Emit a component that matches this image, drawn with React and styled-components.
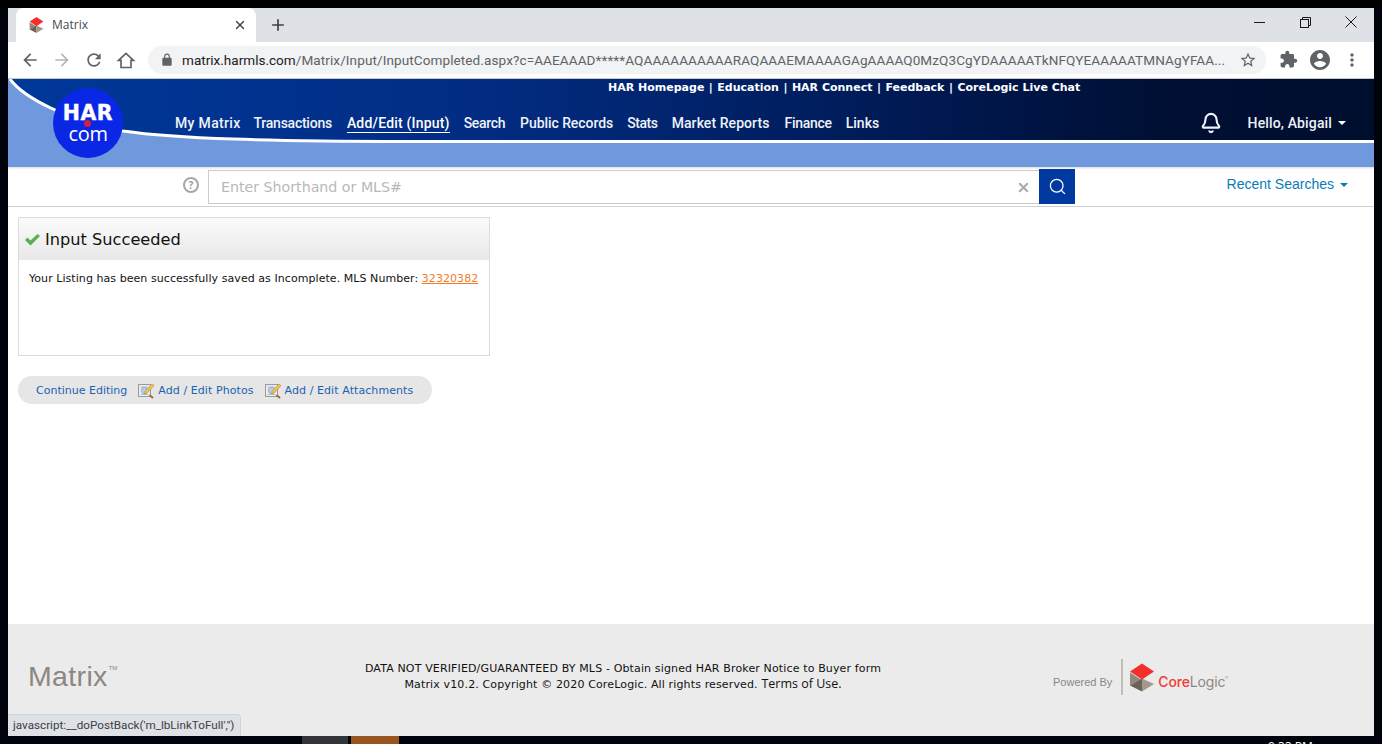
import React from 'react';
import styled, { createGlobalStyle } from 'styled-components';
import { Bell, Search, X } from 'lucide-react';

const Global = createGlobalStyle`
  html, body { margin: 0; padding: 0; background: #000; }
  * { box-sizing: border-box; }
`;
const Screen = styled.div`
  width: 1382px; height: 744px; background: #00030c; overflow: hidden;
  display: flex; flex-direction: column; position: relative;
`;
const TopEdge = styled.div`height: 8px; background: #000; flex: none;`;
const Window = styled.div`
  flex: 1; min-height: 0; margin: 0 8px; background: #fff; display: flex; flex-direction: column; position: relative;
`;
const TabStrip = styled.div`
  height: 34px; flex: none; background: #dee1e6; display: flex; align-items: flex-end; padding-left: 8px;
`;
const Tab = styled.div`
  width: 240px; height: 34px; background: #fff; border-radius: 8px 8px 0 0; display: flex; align-items: center;
  padding: 0 9px 0 13px; font: 12px "Open Sans", sans-serif; color: #45494d;
`;
const TabTitle = styled.span`margin-left: 8px; flex: 1; margin-top: -1px;`;
const NewTab = styled.div`width: 44px; height: 34px; display: flex; align-items: center; justify-content: center;`;
const WinControls = styled.div`margin-left: auto; height: 34px; display: flex; align-items: center;`;
const WinBtn = styled.div`width: 46px; height: 28px; display: flex; align-items: center; justify-content: center; margin-bottom: 6px;`;
const Toolbar = styled.div`
  height: 37px; flex: none; background: #fff; border-bottom: 1px solid #c9cbce; display: flex; align-items: center; padding: 0 6px 1px 6px;
`;
const NavBtn = styled.div`width: 32px; height: 28px; display: flex; align-items: center; justify-content: center;`;
const UrlPill = styled.div`
  width: 1118px; height: 28px; margin-left: 6px; margin-right: 6px; border-radius: 14px; background: #f1f3f4;
  display: flex; align-items: center; padding: 0 9px 0 12px; font: 13.55px "Roboto", sans-serif; color: #5f6368; flex: none;
`;
const UrlText = styled.div`
  margin-left: 8px; margin-right: 12px; flex: 1; min-width: 0; white-space: nowrap; overflow: hidden; letter-spacing: .09px;
  b { font-weight: 400; color: #202124; letter-spacing: 0; }
`;
const Header = styled.header`
  height: 88px; flex: none; position: relative; overflow: hidden; color: #fff;
  background: linear-gradient(90deg, #00389b 0%, #022c82 35%, #001a55 65%, #000f33 85%, #000e2e 100%);
  display: flex; flex-direction: column; box-shadow: 0 1px 2px rgba(0,0,0,.15);
`;
const Swoosh = styled.svg`position: absolute; left: 0; top: 0; width: 1366px; height: 88px;`;
const TopLinks = styled.div`
  position: relative; height: 17px; padding-left: 600px; margin-top: 1px;
  font: bold 11px/16px "DejaVu Sans", sans-serif; white-space: nowrap;
`;
const Sep = styled.span`margin: 0 .65px;`;
const NavRow = styled.nav`
  position: relative; display: flex; align-items: center; margin-top: 16px; height: 20px; padding-left: 167px;
`;
const NavItem = styled.a`
  font: 500 14px/18px "Roboto", sans-serif; color: #eef2fa; margin-right: ${p => p.$mr ?? 14}px; white-space: nowrap;
  letter-spacing: ${p => p.$ls || 0}px;
  border-bottom: 1px solid ${p => (p.$active ? '#fff' : 'transparent')};
  ${p => p.$active && 'color:#fff;'}
`;
const UserArea = styled.div`
  margin-left: auto; display: flex; align-items: center; padding-right: 28px;
  font: 500 14px "Roboto", sans-serif; color: #eef2fa; letter-spacing: .14px;
`;
const Caret = styled.span`
  display: inline-block; width: 0; height: 0; border-left: 4px solid transparent; border-right: 4px solid transparent;
  border-top: 4px solid ${p => p.$c || '#fff'}; margin-left: 6px; vertical-align: middle;
`;
const Logo = styled.div`
  position: absolute; left: 45px; top: 9px; width: 70px; height: 70px; border-radius: 50%; background: #0b27e6;
  display: flex; flex-direction: column; align-items: center; color: #fff;
`;
const LogoHar = styled.span`
  font: bold 20.5px/20px "DejaVu Sans", sans-serif; margin-top: 15px; letter-spacing: .5px; -webkit-text-stroke: .4px #fff;
`;
const LogoCom = styled.span`font: 400 20px/19px "Open Sans", sans-serif; margin-top: 1px; letter-spacing: -.3px;`;
const LogoDot = styled.span`position: absolute; left: 31px; top: 32px; width: 7px; height: 7px; border-radius: 50%; background: #d4213d;`;
const SearchRow = styled.div`
  height: 40px; flex: none; border-bottom: 1px solid #d2d2d2; display: flex; align-items: flex-start; position: relative; padding: 2px 0 0 175px;
`;
const Help = styled.div`
  width: 16px; height: 16px; margin-top: 8px; border: 2px solid #a8a8a8; border-radius: 50%; color: #9c9c9c;
  font: bold 10px/12px "Open Sans", sans-serif; text-align: center; flex: none;
`;
const SearchBox = styled.div`
  margin-left: 9px; margin-top: 1px; width: 831px; height: 34px; border: 1px solid #ccc; border-right: 0; display: flex; align-items: center; padding: 0 8px 0 12px;
  font: 14.2px "DejaVu Sans", sans-serif; color: #b9b9b9; flex: none; justify-content: space-between;
`;
const SearchBtn = styled.div`width: 36px; height: 35px; background: #00399f; display: flex; align-items: center; justify-content: center; flex: none;`;
const Recent = styled.div`
  margin-left: auto; margin-top: 7px; padding-right: 26px; font: 14px "Liberation Sans", sans-serif; color: #0b7bb8;
`;
const Content = styled.main`flex: 1; padding: 10px 10px 0; min-height: 0;`;
const Panel = styled.section`width: 472px; height: 139px; border: 1px solid #dcdcdc;`;
const PanelHead = styled.div`
  height: 42px; background: linear-gradient(#fbfbfb, #e8e8e8); display: flex; align-items: center; padding-left: 6px;
  font: 16.2px "DejaVu Sans", sans-serif; color: #111;
`;
const PanelTitle = styled.span`margin-left: 5px;`;
const PanelBody = styled.div`
  padding: 12px 10px; font: 11px/14px "DejaVu Sans", sans-serif; color: #111; white-space: nowrap; letter-spacing: .06px;
`;
const OrangeLink = styled.a`color: #f47a2a; text-decoration: underline;`;
const ActionBar = styled.div`
  margin-top: 20px; width: 414px; height: 28px; border-radius: 14px; background: #e6e6e6; display: flex; align-items: center; padding-left: 18px;
  font: 11px "DejaVu Sans", sans-serif; color: #1a62b0;
`;
const Action = styled.a`
  display: flex; align-items: center; gap: 3px; margin-right: ${p => p.$mr}px; white-space: nowrap; letter-spacing: ${p => p.$ls || 0}px;
`;
const Footer = styled.footer`
  height: 112px; flex: none; background: #ebebeb; display: grid; grid-template-columns: 320px 550px 1fr; align-items: center; padding-left: 20px; padding-bottom: 8px;
`;
const MatrixMark = styled.div`
  font: 28.5px "Liberation Sans", sans-serif; color: #8b8781; letter-spacing: .35px; position: relative; width: max-content;
  sup { font-size: 6px; position: absolute; top: 2px; left: 100%; margin-left: 1px; letter-spacing: 0; line-height: 12px; }
`;
const Legal = styled.div`
  text-align: center; font: 11px/15px "DejaVu Sans", sans-serif; color: #111; white-space: nowrap; letter-spacing: .14px;
`;
const Terms = styled.span`font: 12.5px/15px "Open Sans", sans-serif; letter-spacing: 0;`;
const Powered = styled.div`
  display: flex; align-items: center; padding-left: 155px; margin-top: 2px; font: 11px "Liberation Sans", sans-serif; color: #8b8781;
`;
const PoweredLabel = styled.span`margin-top: 9px;`;
const VRule = styled.span`width: 2px; height: 36px; background: #c4bdb6; margin: 0 7px 0 9px;`;
const CoreWord = styled.span`
  font: 14px "Inter", "Liberation Sans", sans-serif; color: #8b8781; margin-left: 4px; margin-top: 8px; letter-spacing: -.15px; position: relative;
  b { font-weight: 500; color: #f23a33; }
  sup { position: absolute; left: 100%; top: 0; font-size: 4px; line-height: 10px; letter-spacing: 0; }
`;
const StatusTip = styled.div`
  position: absolute; left: 0; bottom: 0; height: 22px; padding: 0 6px 0 5px; background: #dee1e6; border: 1px solid #d0d3d8; border-left: 0; border-bottom: 0;
  border-radius: 0 4px 0 0; font: 11.7px/21px "Roboto", sans-serif; color: #3c4043;
`;
const Taskbar = styled.div`height: 8px; flex: none; display: flex; background: #00030c; padding-left: 302px; position: relative;`;
const TaskItem = styled.span`width: ${p => p.$w}px; margin-right: ${p => p.$mr || 0}px; background: ${p => p.$c};`;
const Clock = styled.span`position: absolute; left: 1268px; top: 4px; font: 12px/14px "Open Sans", sans-serif; color: #fff;`;
const BellWrap = styled.span`display: flex; margin-right: 26px;`;

const Mat = ({ d, size = 20, color = '#5f6368' }) => (
  <svg width={size} height={size} viewBox="0 0 24 24" fill={color}><path d={d} /></svg>
);
const Cube = ({ w, h }) => (
  <svg width={w} height={h} viewBox="0 0 24 28">
    <polygon points="0,9 11,16 0,22" fill="#93887b" />
    <polygon points="0,22 12,15 12,28" fill="#6b6156" />
    <polygon points="12,15 24,20.5 12,28" fill="#a2988c" />
    <polygon points="12,0 24,8 12,16 0,8" fill="#f5302a" />
  </svg>
);
const EditIcon = () => (
  <svg width="17" height="17" viewBox="0 0 17 17">
    <rect x="0.5" y="2.5" width="12" height="12" fill="#e8eef4" stroke="#9a9a9a" />
    <path d="M2.5 5h8M2.5 12.5h8" stroke="#b4bfca" strokeWidth="1" />
    <circle cx="6.5" cy="8.5" r="3.2" fill="#b6cde4" stroke="#8fa6c2" strokeWidth=".8" />
    <path d="M7 9.5 14 2l2 1.6-7 7.6-2.4.6z" fill="#eec452" stroke="#b78a2a" strokeWidth=".6" />
    <path d="M11.5 13l3.5 3" stroke="#a5673a" strokeWidth="2" />
  </svg>
);

export default function App() {
  return (
    <Screen>
      <Global />
      <TopEdge />
      <Window>
        <TabStrip>
          <Tab>
            <Cube w={15} h={16} />
            <TabTitle>Matrix</TabTitle>
            <X size={14} strokeWidth={2.4} color="#3c4043" />
          </Tab>
          <NewTab><Mat size={20} color="#3c4043" d="M19 13h-6v6h-2v-6H5v-2h6V5h2v6h6v2z" /></NewTab>
          <WinControls>
            <WinBtn><svg width="11" height="11" viewBox="0 0 11 11"><path d="M0 5.5h11" stroke="#1a1a1a" /></svg></WinBtn>
            <WinBtn><svg width="11" height="11" viewBox="0 0 11 11" fill="none" stroke="#1a1a1a"><rect x=".5" y="2.5" width="8" height="8" /><path d="M2.5 2.5v-2h8v8h-2" /></svg></WinBtn>
            <WinBtn><svg width="12" height="12" viewBox="0 0 12 12"><path d="M.5.5l11 11M11.5.5l-11 11" stroke="#1a1a1a" /></svg></WinBtn>
          </WinControls>
        </TabStrip>
        <Toolbar>
          <NavBtn><Mat d="M20 11H7.83l5.59-5.59L12 4l-8 8 8 8 1.41-1.41L7.83 13H20v-2z" /></NavBtn>
          <NavBtn><Mat color="#b5b7ba" d="M12 4l-1.41 1.41L16.17 11H4v2h12.17l-5.58 5.59L12 20l8-8z" /></NavBtn>
          <NavBtn><Mat d="M17.65 6.35C16.2 4.9 14.21 4 12 4c-4.42 0-7.99 3.58-7.99 8s3.57 8 7.99 8c3.73 0 6.84-2.55 7.73-6h-2.08c-.82 2.33-3.04 4-5.65 4-3.31 0-6-2.69-6-6s2.69-6 6-6c1.66 0 3.14.69 4.22 1.78L13 11h7V4l-2.35 2.35z" /></NavBtn>
          <NavBtn>
            <svg width="20" height="20" viewBox="0 0 24 24" fill="none" stroke="#5f6368" strokeWidth="2"><path d="M12 4 3 12.5h3V21h12v-8.5h3z" /></svg>
          </NavBtn>
          <UrlPill>
            <Mat size={14} d="M18 8h-1V6c0-2.76-2.24-5-5-5S7 3.24 7 6v2H6c-1.1 0-2 .9-2 2v10c0 1.1.9 2 2 2h12c1.1 0 2-.9 2-2V10c0-1.1-.9-2-2-2zM9 6c0-1.66 1.34-3 3-3s3 1.34 3 3v2H9V6z" />
            <UrlText><b>matrix.harmls.com</b>/Matrix/Input/InputCompleted.aspx?c=AAEAAAD*****AQAAAAAAAAAARAQAAAEMAAAAGAgAAAAQ0MzQ3CgYDAAAAATkNFQYEAAAAATMNAgYFAA...</UrlText>
            <Mat size={18} d="M22 9.24l-7.19-.62L12 2 9.19 8.63 2 9.24l5.46 4.73L5.82 21 12 17.27 18.18 21l-1.63-7.03L22 9.24zM12 15.4l-3.76 2.27 1-4.28-3.32-2.88 4.38-.38L12 6.1l1.71 4.04 4.38.38-3.32 2.88 1 4.28L12 15.4z" />
          </UrlPill>
          <NavBtn><Mat size={19} d="M20.5 11H19V7c0-1.1-.9-2-2-2h-4V3.5C13 2.12 11.88 1 10.5 1S8 2.12 8 3.5V5H4c-1.1 0-1.99.9-1.99 2v3.8H3.5c1.49 0 2.7 1.21 2.7 2.7s-1.21 2.7-2.7 2.7H2V20c0 1.1.9 2 2 2h3.8v-1.5c0-1.49 1.21-2.7 2.7-2.7 1.49 0 2.7 1.21 2.7 2.7V22H17c1.1 0 2-.9 2-2v-4h1.5c1.38 0 2.5-1.12 2.5-2.5S21.88 11 20.5 11z" /></NavBtn>
          <NavBtn><Mat size={24} d="M12 2C6.48 2 2 6.48 2 12s4.48 10 10 10 10-4.48 10-10S17.52 2 12 2zm0 3c1.66 0 3 1.34 3 3s-1.34 3-3 3-3-1.34-3-3 1.34-3 3-3zm0 14.2c-2.5 0-4.71-1.28-6-3.22.03-1.99 4-3.08 6-3.08 1.99 0 5.97 1.09 6 3.08-1.29 1.94-3.5 3.22-6 3.22z" /></NavBtn>
          <NavBtn><Mat size={20} d="M12 8c1.1 0 2-.9 2-2s-.9-2-2-2-2 .9-2 2 .9 2 2 2zm0 2c-1.1 0-2 .9-2 2s.9 2 2 2 2-.9 2-2-.9-2-2-2zm0 6c-1.1 0-2 .9-2 2s.9 2 2 2 2-.9 2-2-.9-2-2-2z" /></NavBtn>
        </Toolbar>
        <Header>
          <Swoosh viewBox="0 0 1366 88">
            <path d="M0 0 L2 0 C15 18 60 42 115 52 C170 60 260 62 400 62.5 L1366 62.5 L1366 88 L0 88 Z" fill="#7098dc" />
            <path d="M2 0 C15 18 60 42 115 52 C170 60 260 62 400 62.5 L1366 62.5" fill="none" stroke="#fff" strokeWidth="3" />
          </Swoosh>
          <TopLinks>
            HAR Homepage <Sep>|</Sep> Education <Sep>|</Sep> HAR Connect <Sep>|</Sep> Feedback <Sep>|</Sep> CoreLogic Live Chat
          </TopLinks>
          <NavRow>
            <NavItem $ls={0.33} $mr={13}>My Matrix</NavItem>
            <NavItem $ls={-0.25} $mr={15}>Transactions</NavItem>
            <NavItem $ls={0.19} $active>Add/Edit (Input)</NavItem>
            <NavItem $ls={-0.33} $mr={15}>Search</NavItem>
            <NavItem $ls={-0.07}>Public Records</NavItem>
            <NavItem $ls={-0.4}>Stats</NavItem>
            <NavItem $ls={0.07} $mr={15}>Market Reports</NavItem>
            <NavItem $ls={-0.29}>Finance</NavItem>
            <NavItem>Links</NavItem>
            <UserArea>
              <BellWrap><Bell size={22} strokeWidth={2.3} color="#eef2fa" /></BellWrap>
              Hello, Abigail<Caret />
            </UserArea>
          </NavRow>
          <Logo>
            <LogoHar>HAR</LogoHar>
            <LogoCom>com</LogoCom>
            <LogoDot />
          </Logo>
        </Header>
        <SearchRow>
          <Help>?</Help>
          <SearchBox>
            Enter Shorthand or MLS#
            <X size={15} strokeWidth={3} color="#a9a9a9" />
          </SearchBox>
          <SearchBtn><Search size={19} strokeWidth={1.6} color="#fff" /></SearchBtn>
          <Recent>Recent Searches<Caret $c="#0b7bb8" /></Recent>
        </SearchRow>
        <Content>
          <Panel>
            <PanelHead>
              <svg width="15" height="13" viewBox="0 0 15 13"><path d="M0 7l2.5-2.5L5.5 7.5 12.5 1 15 3 5.5 12.5z" fill="#5ab04e" /></svg>
              <PanelTitle>Input Succeeded</PanelTitle>
            </PanelHead>
            <PanelBody>Your Listing has been successfully saved as Incomplete. MLS Number: <OrangeLink>32320382</OrangeLink></PanelBody>
          </Panel>
          <ActionBar>
            <Action $mr={11}>Continue Editing</Action>
            <Action $mr={11} $ls={0.08}><EditIcon />Add / Edit Photos</Action>
            <Action $mr={0} $ls={0.08}><EditIcon />Add / Edit Attachments</Action>
          </ActionBar>
        </Content>
        <Footer>
          <MatrixMark>Matrix<sup>TM</sup></MatrixMark>
          <Legal>
            DATA NOT VERIFIED/GUARANTEED BY MLS - Obtain signed HAR Broker Notice to Buyer form<br />
            Matrix v10.2. Copyright © 2020 CoreLogic. All rights reserved. <Terms>Terms of Use.</Terms>
          </Legal>
          <Powered>
            <PoweredLabel>Powered By</PoweredLabel>
            <VRule />
            <Cube w={24} h={29} />
            <CoreWord><b>Core</b>Logic<sup>®</sup></CoreWord>
          </Powered>
        </Footer>
        <StatusTip>javascript:__doPostBack('m_lbLinkToFull','')</StatusTip>
      </Window>
      <Taskbar>
        <TaskItem $w={46} $mr={3} $c="#34353a" />
        <TaskItem $w={48} $c="#99551f" />
        <Clock>9:33 PM</Clock>
      </Taskbar>
    </Screen>
  );
}
